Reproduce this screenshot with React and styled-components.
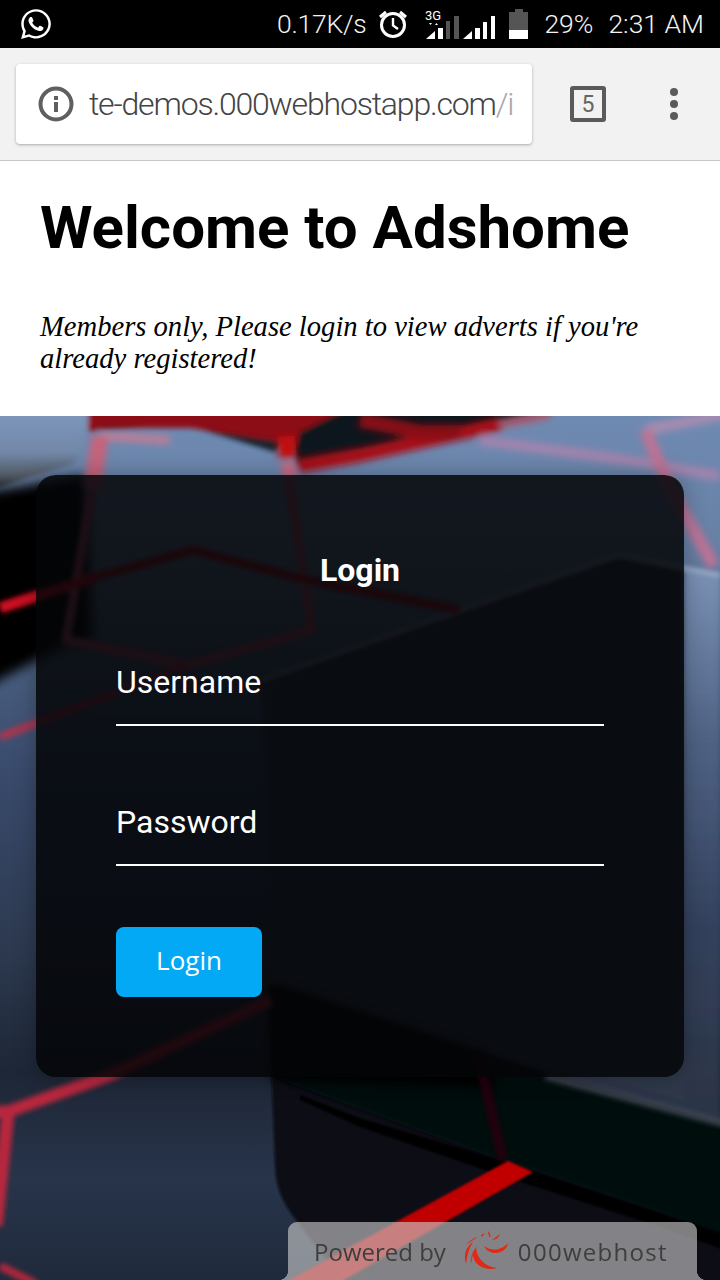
import React from 'react';
import styled, { createGlobalStyle } from 'styled-components';
import { FaWhatsapp } from 'react-icons/fa';

const Global = createGlobalStyle`
  html, body { margin: 0; padding: 0; background: #fff; }
  body { width: 720px; height: 1280px; overflow: hidden; font-family: Roboto, "Liberation Sans", sans-serif; }
  * { box-sizing: border-box; }
`;

const Page = styled.div`
  width: 720px; height: 1280px; display: flex; flex-direction: column; overflow: hidden;
`;
const StatusBar = styled.header`
  height: 48px; flex: none; background: #000; color: #f4f4f4; display: flex; align-items: center;
  padding: 0 16px 0 19px; font-weight: 300; font-size: 26.5px;
`;
const StatusLeft = styled.div`display: flex; margin-right: auto; margin-top: -1px;`;
const StatusGroup = styled.div`display: flex; align-items: center;`;
const StatusText = styled.span`
  margin-left: ${p => p.$ml || 0}px; white-space: nowrap; line-height: 48px; letter-spacing: ${p => p.$ls || 0}px;
`;
const StatusIcon = styled.svg`display: block; flex: none; margin-left: ${p => p.$ml || 0}px;`;

const Toolbar = styled.div`
  height: 113px; flex: none; background: #f2f2f2; border-bottom: 1px solid #c6c6c6;
  display: flex; align-items: flex-start; padding: 16px 0 0 16px;
`;
const UrlBox = styled.div`
  width: 516px; height: 80px; background: #fff; border-radius: 4px; box-shadow: 0 1px 3px rgba(0,0,0,.3);
  display: flex; align-items: center; padding: 0 0 0 22px; overflow: hidden;
`;
const UrlText = styled.div`
  margin-left: 15px; font-size: 32px; font-weight: 300; color: #444; white-space: nowrap; flex: 1; letter-spacing: -1.18px;
`;
const UrlTail = styled.span`color: #a8a8a8;`;
const TabCount = styled.div`
  width: 36px; height: 36px; margin: 22px 0 0 38px; border: 4px solid #5a5a5a; border-radius: 3px; color: #666;
  font-size: 23px; font-weight: 400; display: flex; align-items: center; justify-content: center; flex: none;
`;
const Dots = styled.div`
  margin: 24px 0 0 64px; display: flex; flex-direction: column; gap: 4px; flex: none;
`;
const Dot = styled.i`display: block; width: 8px; height: 8px; border-radius: 50%; background: #5a5a5a;`;

const Hero = styled.section`
  height: 255px; flex: none; background: #fff; padding: 27px 40px 0 40px;
`;
const Title = styled.h1`
  margin: 0; font-size: 60px; line-height: 80px; font-weight: 700; color: #000;
`;
const Tagline = styled.p`
  margin: 43px 0 0; font-family: "Liberation Serif", serif; font-style: italic; font-size: 28.6px; line-height: 32px; color: #000; width: 625px;
`;

const Stage = styled.main`
  position: relative; flex: 1; background: #2a3548; padding: 59px 36px 0;
`;
const Backdrop = styled.svg`
  position: absolute; inset: 0; width: 720px; height: 864px; display: block;
`;
const Card = styled.form`
  position: relative; height: 602px; border-radius: 20px; background: rgba(4,5,7,.86);
  box-shadow: 0 0 22px rgba(0,0,0,.28); padding: 76px 80px 0;
`;
const CardTitle = styled.h2`
  margin: 0; color: #fff; font-size: 32px; line-height: 38px; font-weight: 700; text-align: center;
`;
const Field = styled.input`
  display: block; width: 100%; height: 64px; margin-top: ${p => p.$mt}px; border: 0; border-bottom: 2px solid #fff; background: transparent;
  font: 400 32px Roboto, sans-serif; color: #fff; padding: 0 0 22px; outline: 0;
  &::placeholder { color: #fff; opacity: 1; }
`;
const Submit = styled.button`
  display: block; width: 146px; height: 70px; margin-top: 61px; border: 0; border-radius: 8px; background: #03a9f4; color: #fff;
  font: 400 26px "Open Sans", sans-serif; padding: 0 0 4px;
`;
const Badge = styled.aside`
  position: absolute; left: 288px; bottom: 0; width: 409px; height: 58px; border-radius: 9px 9px 0 0;
  background: rgba(205,205,205,.62); display: flex; align-items: center; padding: 0 0 0 26px; filter: blur(.6px);
  color: #3e3e3e; font: 400 24px "Open Sans", sans-serif; white-space: nowrap;
  &::before, &::after { content: ""; position: absolute; bottom: 0; width: 10px; height: 10px; }
  &::before { left: -10px; background: radial-gradient(circle at 0 0, transparent 10px, rgba(205,205,205,.62) 10.5px); }
  &::after { right: -10px; background: radial-gradient(circle at 100% 0, transparent 10px, rgba(205,205,205,.62) 10.5px); }
`;
const BadgeLogo = styled.svg`display: block; margin: 0 10px 0 16px; flex: none;`;
const BadgeBrand = styled.span`letter-spacing: 1.3px;`;

const Scene = () => (
  <Backdrop viewBox="0 416 720 864" preserveAspectRatio="none" aria-hidden="true">
    <defs>
      <linearGradient id="sky" x1="0" y1="0" x2="0" y2="1">
        <stop offset="0" stopColor="#6f8ab2" />
        <stop offset=".15" stopColor="#6780a4" />
        <stop offset=".28" stopColor="#4a5f80" />
        <stop offset=".42" stopColor="#38496a" />
        <stop offset=".62" stopColor="#2c394f" />
        <stop offset=".76" stopColor="#1d2636" />
        <stop offset=".88" stopColor="#28344a" />
        <stop offset="1" stopColor="#1f2a3c" />
      </linearGradient>
      <linearGradient id="rightFace" x1="0" y1="0" x2="0" y2="1">
        <stop offset="0" stopColor="#7d94b8" />
        <stop offset=".32" stopColor="#4f6284" />
        <stop offset=".65" stopColor="#33415d" />
        <stop offset="1" stopColor="#2b3343" />
      </linearGradient>
      <linearGradient id="tlBlock" x1="0" y1="0" x2="0" y2="1">
        <stop offset="0" stopColor="#7d97bd" />
        <stop offset=".55" stopColor="#7288a8" />
        <stop offset=".85" stopColor="#4f5660" />
        <stop offset="1" stopColor="#1a1c20" />
      </linearGradient>
      <filter id="soft" x="-10%" y="-10%" width="120%" height="120%"><feGaussianBlur stdDeviation="2.5" /></filter>
      <filter id="mist" x="-10%" y="-10%" width="120%" height="120%"><feGaussianBlur stdDeviation="3.5" /></filter>
      <filter id="tight" x="-10%" y="-10%" width="120%" height="120%"><feGaussianBlur stdDeviation="1.3" /></filter>
      <filter id="softer" x="-30%" y="-30%" width="160%" height="160%"><feGaussianBlur stdDeviation="6" /></filter>
    </defs>
    <rect x="0" y="416" width="720" height="864" fill="url(#sky)" />
    <path d="M-20 492 L85 476 L92 640 L66 645 L-20 690 Z" fill="#040404" filter="url(#softer)" />
    <g filter="url(#soft)">
      <path d="M-5 410 H90 C88 430 82 448 74 464 L0 488 H-5 Z" fill="url(#tlBlock)" />
      <path d="M298 466 L460 433 L560 410 H280 Z" fill="#11151b" />
      <path d="M100 430 L190 426 L275 452 L286 440 L260 424 H110 Z" fill="#13202c" />
      <path d="M88 410 H345 L300 432 L296 445 L270 440 L190 428 L105 428 L88 432 Z" fill="#8c0c13" />
      <path d="M262 680 L619 557 L720 573 V1127 L275 985 Z" fill="url(#rightFace)" />
      <path d="M262 680 L619 557 L684 570 V1100 L275 985 Z" fill="#2f3848" />
    </g>
    <path d="M262 680 L610 558 C618 555 625 556 632 558 L720 575" stroke="#c3d3e6" strokeWidth="2.5" fill="none" filter="url(#soft)" opacity=".8" />
    <path d="M268 985 L553 1077 L725 1125 V1290 H345 C310 1225 276 1215 275 1165 Z" fill="#0b0e13" filter="url(#tight)" />
    <path d="M275 985 L553 1077 L725 1125 V1238 L660 1213 L493 1158 L280 1080 Z" fill="#06080b" filter="url(#soft)" />
    <path d="M300 1095 L360 1118 L493 1158 L660 1213 L725 1234 V1250 L660 1227 L493 1173 L360 1127 L300 1100 Z" fill="#000" filter="url(#tight)" />
    <path d="M272 985 L480 1052 L500 1088 L272 1080 Z" fill="#000" filter="url(#softer)" />
    <path d="M545 1076 L725 1124" stroke="#4a505c" strokeWidth="7" fill="none" filter="url(#soft)" opacity=".75" />
    <g fill="none" filter="url(#mist)" strokeLinejoin="round">
      <path d="M286 436 L288 458" stroke="#c30a10" strokeWidth="18" />
      <path d="M288 462 L289 480" stroke="#c76a84" strokeWidth="14" />
      <path d="M100 436 L170 440" stroke="#c27d94" strokeWidth="8" />
      <path d="M100 436 L92 490" stroke="#c5647c" strokeWidth="17" />
      <path d="M298 466 L360 455 L460 433 L500 424" stroke="#a80e17" strokeWidth="14" />
      <path d="M500 424 L550 414" stroke="#a85a70" strokeWidth="9" />
      <path d="M360 420 L420 432 L460 432" stroke="#8a0c13" strokeWidth="15" />
      <path d="M480 440 L640 462 L720 476" stroke="#a284ae" strokeWidth="10" />
      <path d="M725 414 L645 430" stroke="#a88cb0" strokeWidth="10" />
      <path d="M645 430 L672 492 L714 566" stroke="#bd7295" strokeWidth="12" />
    </g>
    <g fill="none" filter="url(#soft)" strokeLinejoin="round">
      <path d="M92 490 L66 640 L188 665 L312 630 L289 480" stroke="#b05068" strokeWidth="9" />
      <path d="M96 577 L193 550 L294 577 L459 610" stroke="#a50d18" strokeWidth="8" />
      <path d="M0 608 L96 577" stroke="#d01020" strokeWidth="11" />
      <path d="M0 737 L188 665" stroke="#a8364f" strokeWidth="8" />
      <path d="M-6 1112 L10 1111 L110 1075 L271 1000" stroke="#b8283e" strokeWidth="12" />
      <path d="M8 1112 L-4 1226" stroke="#b8283e" strokeWidth="13" />
      <path d="M0 1266 L36 1284" stroke="#b3263a" strokeWidth="8" />
      <path d="M477 1050 L503 1160" stroke="#200508" strokeWidth="10" />
    </g>
    <path d="M508 1161 L533 1172 L335 1285 L280 1285 Z" fill="#c00404" filter="url(#tight)" />
  </Backdrop>
);

const Logo = () => (
  <BadgeLogo width="46" height="40" viewBox="0 0 46 40" fill="#e02a16" stroke="none" aria-hidden="true">
    <path d="M14 17 C15 28 24 36 35 37 C26 40 12 36 11 24 C11 21 12 19 14 17 Z" />
    <path d="M22 15 C30 21 40 19 46 12 C45 22 28 27 22 15 Z" />
    <path d="M11 11 C4 16 1 24 4 33 C5 25 7 17 11 11 Z" />
    <path d="M16 15 C10 20 8 27 9 33 C10 26 12 20 16 15 Z" opacity=".85" />
    <path d="M4 14 C7 10 11 7 16 6 C12 9 8 11 4 14 Z" opacity=".85" />
    <path d="M19 4 L23 2 L20 6 Z M26 0 C28 2 29 4 28 7 C27 5 26 3 26 0 Z M38 3 C37 6 34 9 30 9 C33 7 35 5 38 3 Z" />
  </BadgeLogo>
);

export default function App() {
  return (
    <Page>
      <Global />
      <StatusBar>
        <StatusLeft><FaWhatsapp size={34} color="#fff" /></StatusLeft>
        <StatusGroup>
          <StatusText $ls={-0.25}>0.17K/s</StatusText>
          <StatusIcon $ml={12} width="30" height="30" viewBox="0 0 30 30" fill="none" stroke="#fff" aria-hidden="true">
            <circle cx="15" cy="16" r="11.5" strokeWidth="3" />
            <path d="M15 9 V16.5 L20 20" strokeWidth="2.4" />
            <path d="M2 8 L8 3 M28 8 L22 3" strokeWidth="3" />
          </StatusIcon>
          <StatusIcon $ml={16} width="74" height="32" viewBox="0 0 74 32" fill="#fff" aria-hidden="true">
            <text x="1" y="12" fontFamily="Roboto, sans-serif" fontSize="13" fontWeight="400" fill="#fff">3G</text>
            <path d="M5 15 h3 l-1.5 2z M11 17 h3 l-1.5 -2z" />
            <path d="M2 31 L11 23 V31 Z M14 31 V20 H19 V31 Z" />
            <path d="M22 31 V13 H26 V31 Z M30 31 V8 H35 V31 Z" fill="#555" />
            <path d="M39 31 L48 23 V31 Z M51 31 V20 H56 V31 Z M59 31 V14 H63 V31 Z M67 31 V8 H71 V31 Z" />
          </StatusIcon>
          <StatusIcon $ml={11} width="20" height="30" viewBox="0 0 20 30" aria-hidden="true">
            <path d="M6 0 H14 V3 H19 V30 H0 V3 H6 Z" fill="#555" />
            <rect x="0" y="21" width="19" height="9" fill="#fff" />
          </StatusIcon>
          <StatusText $ml={15}>29%</StatusText>
          <StatusText $ml={15}>2:31 AM</StatusText>
        </StatusGroup>
      </StatusBar>
      <Toolbar>
        <UrlBox>
          <svg width="36" height="36" viewBox="0 0 36 36" style={{ flex: 'none' }} aria-hidden="true">
            <circle cx="18" cy="18" r="15.5" fill="none" stroke="#5f5f5f" strokeWidth="4" />
            <rect x="16" y="16" width="4" height="10" fill="#5f5f5f" />
            <rect x="16" y="10" width="4" height="4" fill="#5f5f5f" />
          </svg>
          <UrlText>te-demos.000webhostapp.com<UrlTail>/i</UrlTail></UrlText>
        </UrlBox>
        <TabCount>5</TabCount>
        <Dots><Dot /><Dot /><Dot /></Dots>
      </Toolbar>
      <Hero>
        <Title>Welcome to Adshome</Title>
        <Tagline>Members only, Please login to view adverts if you're already registered!</Tagline>
      </Hero>
      <Stage>
        <Scene />
        <Card onSubmit={e => e.preventDefault()}>
          <CardTitle>Login</CardTitle>
          <Field $mt={73} placeholder="Username" />
          <Field $mt={76} placeholder="Password" type="password" />
          <Submit type="submit">Login</Submit>
        </Card>
        <Badge>
          Powered by
          <Logo />
          <BadgeBrand>000webhost</BadgeBrand>
        </Badge>
      </Stage>
    </Page>
  );
}
